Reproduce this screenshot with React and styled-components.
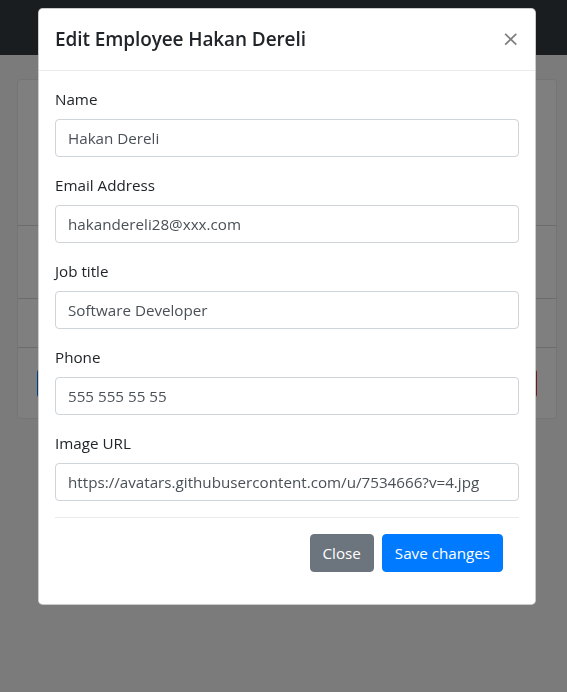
import styled, { createGlobalStyle } from "styled-components";

const GlobalStyle = createGlobalStyle`
  html, body {
    margin: 0;
    height: 100%;
  }
  body {
    background-color: #f7f7f7;
    font-family: "Open Sans", "Noto Sans", sans-serif;
    color: #212529;
  }
  * {
    box-sizing: border-box;
  }
`;

const Navbar = styled.nav`
  height: 55px;
  background-color: #343a40;
`;

const Card = styled.div`
  margin: 24px 0 0 17px;
  width: 540px;
  background-color: #fff;
  border: 1px solid rgba(0, 0, 0, 0.08);
  border-radius: 4px;
`;

const CardRow = styled.div`
  height: ${(p) => p.h}px;
  border-bottom: ${(p) => (p.last ? "none" : "1px solid #d8d8d8")};
  display: flex;
  align-items: center;
  justify-content: space-between;
  padding: 0 19px;
`;

const BackButton = styled.div`
  width: 60px;
  height: 29px;
  border-radius: 4px;
  background-color: ${(p) => p.color};
`;

const Overlay = styled.div`
  position: fixed;
  inset: 0;
  background-color: rgba(0, 0, 0, 0.5);
  padding: 8px 0 0 38px;
`;

const Modal = styled.div`
  width: 498px;
  background-color: #fff;
  border: 1px solid rgba(0, 0, 0, 0.2);
  border-radius: 4.8px;
`;

const Header = styled.div`
  display: flex;
  align-items: flex-start;
  justify-content: space-between;
  padding: 15px 16px 16px;
  border-bottom: 1px solid #e9ecef;
`;

const Title = styled.h5`
  margin: 0;
  font-size: 19px;
  font-weight: 600;
  line-height: 30px;
  letter-spacing: -0.1px;
`;

const CloseX = styled.button`
  border: 0;
  background: transparent;
  padding: 0;
  margin: 0 -1px 0 0;
  height: 30px;
  font-family: "DejaVu Sans", sans-serif;
  font-size: 22px;
  font-weight: 400;
  line-height: 30px;
  color: #000;
  opacity: 0.5;
`;

const Body = styled.div`
  padding: 16px;
`;

const Group = styled.div`
  margin-bottom: 16px;
`;

const Label = styled.label`
  display: block;
  margin-bottom: 8px;
  font-size: 15.2px;
  line-height: 24px;
`;

const Input = styled.input`
  display: block;
  width: 100%;
  height: 38px;
  padding: 6px 12px;
  font-family: inherit;
  font-size: 15.2px;
  line-height: 24px;
  color: #495057;
  background-color: #fff;
  border: 1px solid #ced4da;
  border-radius: 4px;
`;

const Footer = styled.div`
  display: flex;
  justify-content: flex-end;
  padding: 12px;
  border-top: 1px solid #e9ecef;
`;

const Button = styled.button`
  margin: 4px;
  height: 38px;
  padding: 6px 12px;
  font-family: inherit;
  font-size: 15.2px;
  line-height: 24px;
  color: #fff;
  border: 1px solid ${(p) => p.bg};
  background-color: ${(p) => p.bg};
  border-radius: 4px;
`;

const fields = [
  { label: "Name", value: "Hakan Dereli" },
  { label: "Email Address", value: "hakandereli28@xxx.com" },
  { label: "Job title", value: "Software Developer" },
  { label: "Phone", value: "555 555 55 55" },
  { label: "Image URL", value: "https://avatars.githubusercontent.com/u/7534666?v=4.jpg" },
];

const App = () => {
  return (
    <>
      <GlobalStyle />
      <Navbar />
      <Card>
        <CardRow h={146} />
        <CardRow h={73} />
        <CardRow h={49} />
        <CardRow h={70} last>
          <BackButton color="#007bff" />
          <BackButton color="#dc3545" />
        </CardRow>
      </Card>
      <Overlay>
        <Modal>
          <Header>
            <Title>Edit Employee Hakan Dereli</Title>
            <CloseX>×</CloseX>
          </Header>
          <Body>
            {fields.map((f) => (
              <Group key={f.label}>
                <Label>{f.label}</Label>
                <Input defaultValue={f.value} />
              </Group>
            ))}
            <Footer>
              <Button bg="#6c757d">Close</Button>
              <Button bg="#007bff">Save changes</Button>
            </Footer>
          </Body>
        </Modal>
      </Overlay>
    </>
  );
};

export default App;
